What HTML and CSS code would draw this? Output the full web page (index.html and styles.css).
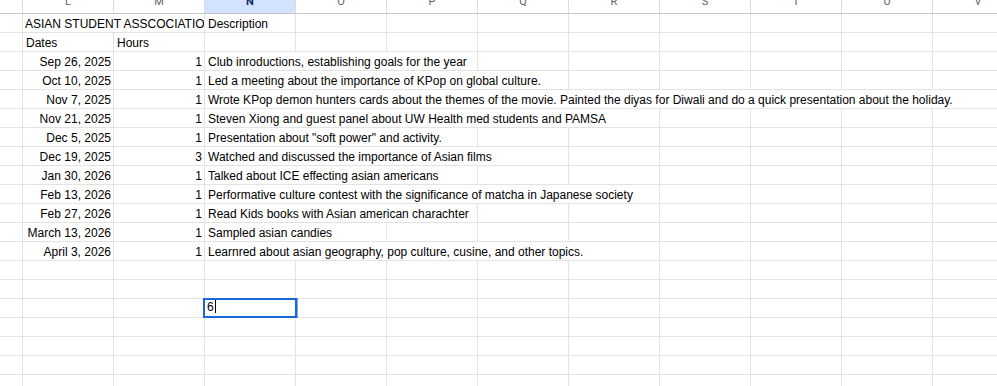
FILE: index.html
```html
<!DOCTYPE html>
<html>
<head>
<meta charset="utf-8">
<link rel="stylesheet" href="styles.css">
</head>
<body>
<div class="sheet">
  <div class="row head">
    <div class="cell k"></div>
    <div class="cell"><span>L</span></div>
    <div class="cell"><span>M</span></div>
    <div class="cell sel"><span>N</span></div>
    <div class="cell"><span>O</span></div>
    <div class="cell"><span>P</span></div>
    <div class="cell"><span>Q</span></div>
    <div class="cell"><span>R</span></div>
    <div class="cell"><span>S</span></div>
    <div class="cell"><span>T</span></div>
    <div class="cell"><span>U</span></div>
    <div class="cell"><span>V</span></div>
  </div>
  <div class="row">
    <div class="cell k"></div>
    <div class="cell s2 title">ASIAN STUDENT ASSCOCIATION</div>
    <div class="cell">Description</div>
    <div class="cell"></div><div class="cell"></div><div class="cell"></div><div class="cell"></div><div class="cell"></div><div class="cell"></div><div class="cell"></div><div class="cell"></div>
  </div>
  <div class="row">
    <div class="cell k"></div>
    <div class="cell">Dates</div>
    <div class="cell">Hours</div>
    <div class="cell"></div><div class="cell"></div><div class="cell"></div><div class="cell"></div><div class="cell"></div><div class="cell"></div><div class="cell"></div><div class="cell"></div><div class="cell"></div>
  </div>
  <div class="row">
    <div class="cell k"></div>
    <div class="cell num">Sep 26, 2025</div>
    <div class="cell num">1</div>
    <div class="cell s3">Club inroductions, establishing goals for the year</div>
    <div class="cell"></div><div class="cell"></div><div class="cell"></div><div class="cell"></div><div class="cell"></div><div class="cell"></div>
  </div>
  <div class="row">
    <div class="cell k"></div>
    <div class="cell num">Oct 10, 2025</div>
    <div class="cell num">1</div>
    <div class="cell s4">Led a meeting about the importance of KPop on global culture.</div>
    <div class="cell"></div><div class="cell"></div><div class="cell"></div><div class="cell"></div><div class="cell"></div>
  </div>
  <div class="row">
    <div class="cell k"></div>
    <div class="cell num">Nov 7, 2025</div>
    <div class="cell num">1</div>
    <div class="cell s9">Wrote KPop demon hunters cards about the themes of the movie. Painted the diyas for Diwali and do a quick presentation about the holiday.</div>
  </div>
  <div class="row">
    <div class="cell k"></div>
    <div class="cell num">Nov 21, 2025</div>
    <div class="cell num">1</div>
    <div class="cell s5">Steven Xiong and guest panel about UW Health med students and PAMSA</div>
    <div class="cell"></div><div class="cell"></div><div class="cell"></div><div class="cell"></div>
  </div>
  <div class="row">
    <div class="cell k"></div>
    <div class="cell num">Dec 5, 2025</div>
    <div class="cell num">1</div>
    <div class="cell s3">Presentation about "soft power" and activity.</div>
    <div class="cell"></div><div class="cell"></div><div class="cell"></div><div class="cell"></div><div class="cell"></div><div class="cell"></div>
  </div>
  <div class="row">
    <div class="cell k"></div>
    <div class="cell num">Dec 19, 2025</div>
    <div class="cell num">3</div>
    <div class="cell s4">Watched and discussed the importance of Asian films</div>
    <div class="cell"></div><div class="cell"></div><div class="cell"></div><div class="cell"></div><div class="cell"></div>
  </div>
  <div class="row">
    <div class="cell k"></div>
    <div class="cell num">Jan 30, 2026</div>
    <div class="cell num">1</div>
    <div class="cell s3">Talked about ICE effecting asian americans</div>
    <div class="cell"></div><div class="cell"></div><div class="cell"></div><div class="cell"></div><div class="cell"></div><div class="cell"></div>
  </div>
  <div class="row">
    <div class="cell k"></div>
    <div class="cell num">Feb 13, 2026</div>
    <div class="cell num">1</div>
    <div class="cell s5">Performative culture contest with the significance of matcha in Japanese society</div>
    <div class="cell"></div><div class="cell"></div><div class="cell"></div><div class="cell"></div>
  </div>
  <div class="row">
    <div class="cell k"></div>
    <div class="cell num">Feb 27, 2026</div>
    <div class="cell num">1</div>
    <div class="cell s3">Read Kids books with Asian american charachter</div>
    <div class="cell"></div><div class="cell"></div><div class="cell"></div><div class="cell"></div><div class="cell"></div><div class="cell"></div>
  </div>
  <div class="row">
    <div class="cell k"></div>
    <div class="cell num">March 13, 2026</div>
    <div class="cell num">1</div>
    <div class="cell s2">Sampled asian candies</div>
    <div class="cell"></div><div class="cell"></div><div class="cell"></div><div class="cell"></div><div class="cell"></div><div class="cell"></div><div class="cell"></div>
  </div>
  <div class="row">
    <div class="cell k"></div>
    <div class="cell num">April 3, 2026</div>
    <div class="cell num">1</div>
    <div class="cell s5">Learnred about asian geography, pop culture, cusine, and other topics.</div>
    <div class="cell"></div><div class="cell"></div><div class="cell"></div><div class="cell"></div>
  </div>
  <div class="row">
    <div class="cell k"></div>
    <div class="cell"></div><div class="cell"></div><div class="cell"></div><div class="cell"></div><div class="cell"></div><div class="cell"></div><div class="cell"></div><div class="cell"></div><div class="cell"></div><div class="cell"></div><div class="cell"></div>
  </div>
  <div class="row">
    <div class="cell k"></div>
    <div class="cell"></div><div class="cell"></div><div class="cell"></div><div class="cell"></div><div class="cell"></div><div class="cell"></div><div class="cell"></div><div class="cell"></div><div class="cell"></div><div class="cell"></div><div class="cell"></div>
  </div>
  <div class="row">
    <div class="cell k"></div>
    <div class="cell"></div><div class="cell"></div>
    <div class="cell active"><div class="editor">6<span class="caret"></span></div></div>
    <div class="cell"></div><div class="cell"></div><div class="cell"></div><div class="cell"></div><div class="cell"></div><div class="cell"></div><div class="cell"></div><div class="cell"></div>
  </div>
  <div class="row">
    <div class="cell k"></div>
    <div class="cell"></div><div class="cell"></div><div class="cell"></div><div class="cell"></div><div class="cell"></div><div class="cell"></div><div class="cell"></div><div class="cell"></div><div class="cell"></div><div class="cell"></div><div class="cell"></div>
  </div>
  <div class="row">
    <div class="cell k"></div>
    <div class="cell"></div><div class="cell"></div><div class="cell"></div><div class="cell"></div><div class="cell"></div><div class="cell"></div><div class="cell"></div><div class="cell"></div><div class="cell"></div><div class="cell"></div><div class="cell"></div>
  </div>
  <div class="row">
    <div class="cell k"></div>
    <div class="cell"></div><div class="cell"></div><div class="cell"></div><div class="cell"></div><div class="cell"></div><div class="cell"></div><div class="cell"></div><div class="cell"></div><div class="cell"></div><div class="cell"></div><div class="cell"></div>
  </div>
  <div class="row">
    <div class="cell k"></div>
    <div class="cell"></div><div class="cell"></div><div class="cell"></div><div class="cell"></div><div class="cell"></div><div class="cell"></div><div class="cell"></div><div class="cell"></div><div class="cell"></div><div class="cell"></div><div class="cell"></div>
  </div>
</div>
</body>
</html>
```

FILE: styles.css
```css
html, body {
  margin: 0;
  padding: 0;
  background: #ffffff;
}

body {
  font-family: "Liberation Sans", Arial, sans-serif;
  font-size: 12px;
  color: #000000;
}

.sheet {
  width: 997px;
  height: 386px;
  overflow: hidden;
}

.row {
  display: flex;
  height: 19px;
  box-sizing: border-box;
  border-bottom: 1px solid #e2e3e3;
}

.cell {
  flex: none;
  width: 91px;
  box-sizing: border-box;
  border-right: 1px solid #e2e3e3;
  padding: 2px 2px 0 3px;
  line-height: 16px;
  white-space: nowrap;
  overflow: hidden;
}

.cell.k { width: 23px; }
.cell.s2 { width: 182px; }
.cell.s3 { width: 273px; }
.cell.s4 { width: 364px; }
.cell.s5 { width: 455px; }
.cell.s9 { width: 819px; overflow: visible; }

.cell.title { padding-left: 2px; padding-right: 0; }

.cell.num { text-align: right; }

/* column header strip (top cut off) */
.row.head {
  height: 14px;
  border-bottom-color: #c4c7c5;
}

.row.head .cell {
  padding: 0;
  display: flex;
  align-items: flex-end;
  justify-content: center;
  font-family: "Roboto", "Liberation Sans", Arial, sans-serif;
  font-size: 11px;
  line-height: 22px;
  color: #5f6368;
  border-right-color: #dadce0;
}

.row.head .cell.sel {
  background: #d3e3fd;
  color: #0b2a66;
  font-weight: bold;
}

/* active cell in edit mode */
.cell.active {
  position: relative;
  overflow: visible;
}

.editor {
  position: absolute;
  top: -1px;
  left: -2px;
  right: -2px;
  bottom: -1px;
  border: 2px solid #1a66db;
  box-shadow: 1px 0 0 #7aa7ee;
  background: #ffffff;
  padding: 0 2px;
  line-height: 14px;
  font-size: 12px;
  display: flex;
  align-items: flex-start;
}

.caret {
  display: inline-block;
  width: 1px;
  height: 13px;
  margin-left: 1px;
  background: #000000;
}
```
